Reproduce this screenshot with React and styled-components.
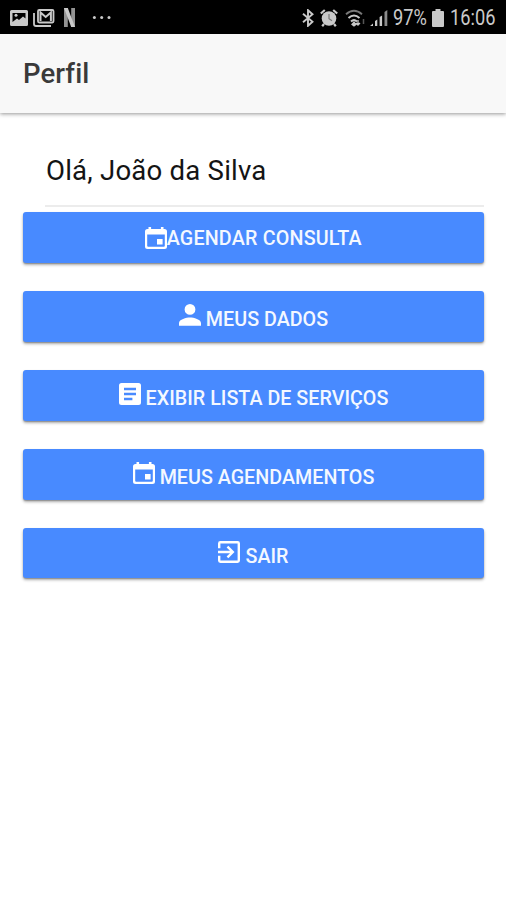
import React from 'react';
import styled, { createGlobalStyle } from 'styled-components';

const GlobalStyle = createGlobalStyle`
  * { box-sizing: border-box; }
  body { margin: 0; background: #fff; font-family: Roboto, sans-serif; }
`;

const Screen = styled.div`
  display: flex;
  flex-direction: column;
  min-height: 900px;
  background: #fff;
`;

const StatusBar = styled.div`
  display: flex;
  align-items: center;
  justify-content: space-between;
  height: 34px;
  padding: 1px 10px 0 9px;
  background: #000;
  color: #c9c9c9;
`;

const StatusGroup = styled.div`
  display: flex;
  align-items: center;
`;

const Glyph = styled.svg`
  display: block;
  flex: none;
  margin-left: ${(p) => p.$gap || 0}px;
`;

const StatusText = styled.span`
  display: block;
  width: ${(p) => p.$width}px;
  margin-left: ${(p) => p.$gap}px;
  padding-top: 1px;
  font-size: 22px;
  line-height: 24px;
  white-space: nowrap;
  transform: scaleX(0.83);
  transform-origin: left center;
`;

const Header = styled.header`
  display: flex;
  align-items: center;
  height: 79px;
  padding: 1px 23px 0;
  background: #f8f8f8;
  box-shadow: 0 1px 4px rgba(0, 0, 0, 0.42);
`;

const Title = styled.h1`
  margin: 0;
  color: #3a3a3a;
  font-size: 27.5px;
  font-weight: 500;
  line-height: 36px;
  letter-spacing: 0.1px;
`;

const Content = styled.main`
  padding: 25px 22px 0 23px;
`;

const Greeting = styled.div`
  height: 69px;
  margin-left: 22px;
  padding: 15px 0 0 1px;
  border-bottom: 2px solid #ececec;
  color: #141414;
  font-size: 27.6px;
  line-height: 36px;
  letter-spacing: 0.2px;
  white-space: nowrap;
`;

const Menu = styled.nav`
  display: flex;
  flex-direction: column;
  gap: 28px;
  padding-top: 5px;
`;

const MenuButton = styled.button`
  display: flex;
  align-items: flex-start;
  justify-content: center;
  gap: ${(p) => (p.$tight ? 0 : 5)}px;
  height: 50.9px;
  padding: ${(p) => (p.$tight ? 14.6 : 13.5)}px 0 0;
  border: 0;
  border-radius: 3px;
  background: #488aff;
  box-shadow: 0 2px 3px rgba(0, 0, 0, 0.32), 0 1px 1px rgba(0, 0, 0, 0.2);
  color: #f4f8ff;
  font: 500 19.7px/24px Roboto, sans-serif;
  text-transform: uppercase;
  white-space: nowrap;
`;

const Label = styled.span`
  margin-top: ${(p) => (p.$tight ? 0.6 : 4)}px;
  margin-left: ${(p) => (p.$tight ? -0.5 : 0)}px;
  letter-spacing: ${(p) => (p.$tight ? 0.2 : 0.02)}px;
`;

const ButtonIcon = styled.svg`
  display: block;
  flex: none;
  width: 22px;
  height: 22px;
  fill: #fff;
`;

const paths = {
  calendar:
    'M3.500 0h2.600v2h9.800V0H18.500v2h1A2.500 2.500 0 0 1 22 4.500V19.500A2.500 2.500 0 0 1 19.500 22H2.500A2.500 2.500 0 0 1 0 19.500V4.500A2.500 2.500 0 0 1 2.500 2H3.500ZM2.200 7.600V18.800a1 1 0 0 0 1 1H18.800a1 1 0 0 0 1-1V7.600ZM12 12H17.600V17.500H12Z',
  person:
    'M11 10.800a5.400 5.400 0 1 0 0-10.800a5.400 5.400 0 0 0 0 10.800ZM11 13.600C7.300 13.600 0 15.500 0 19.100V21.800H22V19.100C22 15.500 14.700 13.600 11 13.600Z',
  list:
    'M2.500 0H19.500A2.500 2.500 0 0 1 22 2.500V19.500A2.500 2.500 0 0 1 19.500 22H2.500A2.500 2.500 0 0 1 0 19.500V2.500A2.500 2.500 0 0 1 2.500 0ZM5 4.800V7.200H17V4.800ZM5 9.800V12.200H17V9.800ZM5 14.800V17.200H13.400V14.800Z',
  exit:
    'M8.600 15.600 10.300 17.300 16.500 11 10.300 4.700 8.600 6.400 12 9.800H0V12.200H12ZM19.600 0H2.400A2.400 2.400 0 0 0 0 2.400V7.300H2.400V2.400H19.600V19.600H2.400V14.700H0V19.600A2.400 2.400 0 0 0 2.400 22H19.600A2.400 2.400 0 0 0 22 19.600V2.400A2.400 2.400 0 0 0 19.600 0Z',
};

const items = [
  { icon: 'calendar', label: 'Agendar consulta', tight: true },
  { icon: 'person', label: 'Meus dados' },
  { icon: 'list', label: 'Exibir lista de serviços' },
  { icon: 'calendar', label: 'Meus agendamentos' },
  { icon: 'exit', label: 'Sair' },
];

function Notifications() {
  return (
    <StatusGroup>
      <Glyph width="18" height="16" viewBox="0 0 18 16" fill="#c9c9c9" $gap={1}>
        <path fillRule="evenodd" d="M1.500 0h15A1.500 1.500 0 0 1 18 1.500v13a1.500 1.500 0 0 1-1.500 1.500h-15A1.500 1.500 0 0 1 0 14.500v-13A1.500 1.500 0 0 1 1.500 0ZM2.500 3V12L7 8.500l2 1.500 4-3.500 2.500 2V3Z" />
        <circle cx="6" cy="5.300" r="1.500" />
      </Glyph>
      <Glyph width="22" height="18" viewBox="0 0 22 18" fill="none" stroke="#c9c9c9" $gap={5}>
        <path d="M1 4v11a2 2 0 0 0 2 2h15" strokeWidth="1.800" />
        <rect x="5" y="1" width="15.500" height="12.500" rx="1.200" strokeWidth="1.800" />
        <path d="M7.500 12V3.500l5.200 4.500 5.200-4.500V12" strokeWidth="2" />
      </Glyph>
      <Glyph width="11" height="19" viewBox="0 0 11 19" $gap={9}>
        <path d="M0 0h3.800v19H0ZM7.200 0H11v19H7.200Z" fill="#939393" />
        <path d="M0 0h3.800L11 19H7.200Z" fill="#c9c9c9" />
      </Glyph>
      <Glyph width="20" height="5" viewBox="0 0 20 5" fill="#c9c9c9" $gap={17}>
        <circle cx="2.400" cy="2.500" r="1.500" />
        <circle cx="9.700" cy="2.500" r="1.500" />
        <circle cx="17" cy="2.500" r="1.500" />
      </Glyph>
    </StatusGroup>
  );
}

function SystemStatus() {
  return (
    <StatusGroup>
      <Glyph width="12" height="18" viewBox="0 0 12 18" fill="none" stroke="#c9c9c9" strokeWidth="1.900">
        <path d="M1 4.800l9.500 8L6 16.800V1.200l4.500 4L1 13.200" />
      </Glyph>
      <Glyph width="18" height="18" viewBox="0 0 18 18" $gap={6}>
        <circle cx="9" cy="9.500" r="7.300" fill="#c9c9c9" />
        <path d="M.8 4.500 4.800 1M17.200 4.500 13.200 1M4 15l-1.800 2.300M14 15l1.800 2.300" stroke="#c9c9c9" strokeWidth="2.200" />
        <path d="M9 5v4.800l3 2" fill="none" stroke="#777" strokeWidth="1.200" />
      </Glyph>
      <Glyph width="21" height="18" viewBox="0 0 21 18" fill="none" stroke="#c9c9c9" $gap={7}>
        <path d="M1 5.200q8-7 16 0" stroke="#777" strokeWidth="1.800" />
        <path d="M3.500 9q5.500-5 11 0M6 12.500q3-2.800 6 0" strokeWidth="2" />
        <path d="M9 13.200 11 15.500 9 17 7 15.500ZM13 11v5m-2-2 2 2 2-2" fill="#c9c9c9" strokeWidth="1.300" />
        <path d="M18.500 10v5" stroke="#555" strokeWidth="1.500" />
      </Glyph>
      <Glyph width="18" height="18" viewBox="0 0 18 18" fill="#c9c9c9" $gap={4}>
        <path d="M0 17h3v-2.500ZM5 17h2.300v-6.500L5 12ZM9.600 17h2.500V6.500L9.600 8Z" />
        <path d="M14.500 17h2.800V1l-2.800 2Z" fill="#8b8b8b" />
      </Glyph>
      <StatusText $gap={5} $width={34}>97%</StatusText>
      <Glyph width="12" height="18" viewBox="0 0 12 18" fill="#c9c9c9" $gap={5}>
        <path d="M3.500 0h5v2H11q1 0 1 1v14q0 1-1 1H1q-1 0-1-1V3q0-1 1-1h2.500Z" />
      </Glyph>
      <StatusText $gap={6} $width={46}>16:06</StatusText>
    </StatusGroup>
  );
}

export default function App() {
  return (
    <Screen>
      <GlobalStyle />
      <StatusBar>
        <Notifications />
        <SystemStatus />
      </StatusBar>
      <Header>
        <Title>Perfil</Title>
      </Header>
      <Content>
        <Greeting>Olá, João da Silva</Greeting>
        <Menu>
          {items.map((item) => (
            <MenuButton key={item.label} $tight={item.tight}>
              <ButtonIcon viewBox="0 0 22 22" aria-hidden="true">
                <path fillRule="evenodd" d={paths[item.icon]} />
              </ButtonIcon>
              <Label $tight={item.tight}>{item.label}</Label>
            </MenuButton>
          ))}
        </Menu>
      </Content>
    </Screen>
  );
}
